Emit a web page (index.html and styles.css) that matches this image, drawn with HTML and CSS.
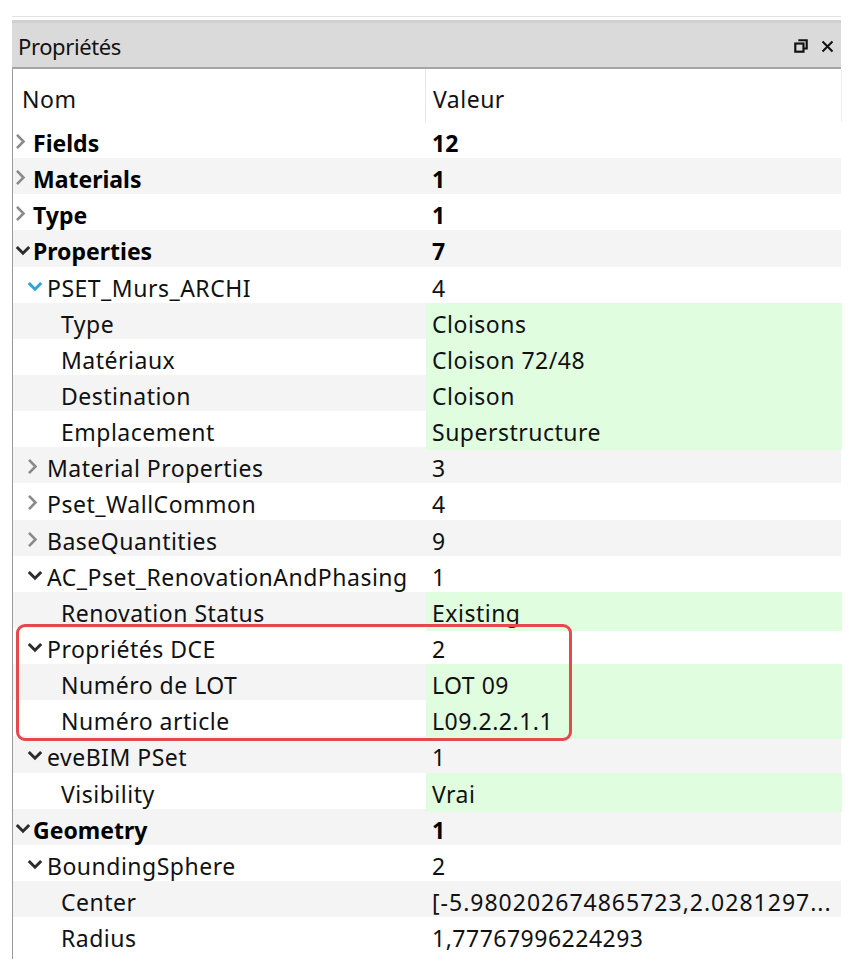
FILE: index.html
```html
<!DOCTYPE html>
<html lang="fr">
<head>
<meta charset="utf-8">
<title>Propriétés</title>
<link rel="stylesheet" href="styles.css">
</head>
<body>
<div class="panel">
  <div class="topline"></div>
  <div class="titlebar">
    <span class="title">Propriétés</span>
    <span class="tb-icons">
      <svg class="ic-restore" width="13" height="13" viewBox="0 0 13 13"><path d="M4 1.2h7.8v7.6H9.2" fill="none" stroke="#111" stroke-width="2"/><rect x="1.2" y="4.2" width="7.6" height="7.6" fill="none" stroke="#111" stroke-width="2"/></svg>
      <svg class="ic-close" width="13" height="13" viewBox="0 0 13 13"><path d="M1.5 1.5l10 10M11.5 1.5l-10 10" stroke="#111" stroke-width="2"/></svg>
    </span>
  </div>
  <div class="tree">
    <div class="head">
      <div class="hcell hname">Nom</div>
      <div class="hcell hval">Valeur</div>
    </div>
    <div class="rows">
      <div class="row"><div class="name l0 b"><span class="tw"><svg width="11" height="17" viewBox="0 0 11 17"><path d="M2 1.8l6.5 6.7-6.5 6.7" class="cr"/></svg></span>Fields</div><div class="val b">12</div></div>
      <div class="row"><div class="name l0 b"><span class="tw"><svg width="11" height="17" viewBox="0 0 11 17"><path d="M2 1.8l6.5 6.7-6.5 6.7" class="cr"/></svg></span>Materials</div><div class="val b">1</div></div>
      <div class="row"><div class="name l0 b"><span class="tw"><svg width="11" height="17" viewBox="0 0 11 17"><path d="M2 1.8l6.5 6.7-6.5 6.7" class="cr"/></svg></span>Type</div><div class="val b">1</div></div>
      <div class="row"><div class="name l0 b"><span class="tw"><svg width="16" height="11" viewBox="0 0 16 11"><path d="M1.8 2l6.2 6.2 6.2-6.2" class="cd"/></svg></span>Properties</div><div class="val b">7</div></div>
      <div class="row"><div class="name l1"><span class="tw"><svg width="16" height="11" viewBox="0 0 16 11"><path d="M1.8 2l6.2 6.2 6.2-6.2" class="cd blue"/></svg></span>PSET_Murs_ARCHI</div><div class="val">4</div></div>
      <div class="row"><div class="name l2">Type</div><div class="val g">Cloisons</div></div>
      <div class="row"><div class="name l2">Matériaux</div><div class="val g">Cloison 72/48</div></div>
      <div class="row"><div class="name l2">Destination</div><div class="val g">Cloison</div></div>
      <div class="row"><div class="name l2">Emplacement</div><div class="val g">Superstructure</div></div>
      <div class="row"><div class="name l1"><span class="tw"><svg width="11" height="17" viewBox="0 0 11 17"><path d="M2 1.8l6.5 6.7-6.5 6.7" class="cr"/></svg></span>Material Properties</div><div class="val">3</div></div>
      <div class="row"><div class="name l1"><span class="tw"><svg width="11" height="17" viewBox="0 0 11 17"><path d="M2 1.8l6.5 6.7-6.5 6.7" class="cr"/></svg></span>Pset_WallCommon</div><div class="val">4</div></div>
      <div class="row"><div class="name l1"><span class="tw"><svg width="11" height="17" viewBox="0 0 11 17"><path d="M2 1.8l6.5 6.7-6.5 6.7" class="cr"/></svg></span>BaseQuantities</div><div class="val">9</div></div>
      <div class="row"><div class="name l1"><span class="tw"><svg width="16" height="11" viewBox="0 0 16 11"><path d="M1.8 2l6.2 6.2 6.2-6.2" class="cd"/></svg></span>AC_Pset_RenovationAndPhasing</div><div class="val">1</div></div>
      <div class="row"><div class="name l2">Renovation Status</div><div class="val g">Existing</div></div>
      <div class="row"><div class="name l1"><span class="tw"><svg width="16" height="11" viewBox="0 0 16 11"><path d="M1.8 2l6.2 6.2 6.2-6.2" class="cd"/></svg></span>Propriétés DCE</div><div class="val">2</div></div>
      <div class="row"><div class="name l2">Numéro de LOT</div><div class="val g">LOT 09</div></div>
      <div class="row"><div class="name l2">Numéro article</div><div class="val g">L09.2.2.1.1</div></div>
      <div class="row"><div class="name l1"><span class="tw"><svg width="16" height="11" viewBox="0 0 16 11"><path d="M1.8 2l6.2 6.2 6.2-6.2" class="cd"/></svg></span>eveBIM PSet</div><div class="val">1</div></div>
      <div class="row"><div class="name l2">Visibility</div><div class="val g">Vrai</div></div>
      <div class="row"><div class="name l0 b"><span class="tw"><svg width="16" height="11" viewBox="0 0 16 11"><path d="M1.8 2l6.2 6.2 6.2-6.2" class="cd"/></svg></span>Geometry</div><div class="val b">1</div></div>
      <div class="row"><div class="name l1"><span class="tw"><svg width="16" height="11" viewBox="0 0 16 11"><path d="M1.8 2l6.2 6.2 6.2-6.2" class="cd"/></svg></span>BoundingSphere</div><div class="val">2</div></div>
      <div class="row"><div class="name l2">Center</div><div class="val wide">[-5.980202674865723,2.0281297...</div></div>
      <div class="row"><div class="name l2">Radius</div><div class="val">1,77767996224293</div></div>
    </div>
  </div>
  <div class="highlight"></div>
</div>
</body>
</html>
```
FILE: styles.css
```css
* { box-sizing: border-box; }
html, body { margin: 0; padding: 0; background: #fff; }
body {
  font-family: "Noto Sans", "Open Sans", sans-serif;
  color: #111;
  width: 858px;
  height: 980px;
  overflow: hidden;
}
.panel {
  position: relative;
  margin-left: 12px;
  width: 829px;
  padding-top: 16px;
}
.topline {
  height: 7px;
  border-top: 1px solid #e2e2e2;
  border-bottom: 3px solid #d0d0d0;
}
.titlebar {
  height: 46px;
  background: #dadada;
  border-bottom: 2px solid #a4a4a4;
  display: flex;
  align-items: center;
  justify-content: space-between;
  padding: 1px 7px 0 6px;
}
.title {
  font-size: 22px;
  letter-spacing: -0.4px;
  color: #111;
}
.tb-icons {
  display: flex;
  align-items: center;
  gap: 13px;
  margin-top: 1px;
}
.ic-restore { width: 14px; height: 14px; }
.tree {
  border-left: 1px solid #9a9a9a;
  padding-bottom: 6px;
}
.head {
  display: grid;
  grid-template-columns: 413px 416px;
  height: 53px;
}
.hcell {
  font-size: 23px;
  padding-top: 12px;
  line-height: 36px;
  color: #111;
  letter-spacing: 0.5px;
}
.hname { padding-left: 9px; border-right: 1px solid #e6e6e6; }
.hval { padding-left: 7px; border-right: 1px solid #ececec; }
.row {
  display: grid;
  grid-template-columns: 413px 416px;
  height: 36.15px;
  font-size: 23px;
  line-height: 36.15px;
}
.row:nth-child(even) { background: #f4f4f4; }
.name {
  display: flex;
  align-items: center;
  white-space: nowrap;
  color: #111;
  padding-top: 3px;
  letter-spacing: 0.5px;
}
.name.l0 { padding-left: 1px; }
.name.l1 { padding-left: 14px; }
.name.l2 { padding-left: 48px; }
.tw {
  width: 19px;
  height: 36px;
  margin-top: -3px;
  display: flex;
  align-items: center;
  justify-content: flex-start;
  flex: none;
}
.l0 .tw { padding-left: 1px; }
.name.l1 .tw { width: 20px; }
.tw svg { display: block; }
.cr { fill: none; stroke: #8a8a8a; stroke-width: 2.6; }
.cd { fill: none; stroke: #2c2c2c; stroke-width: 3; }
.cd.blue { stroke: #2aa4de; }
.val {
  padding-left: 6px;
  padding-top: 3px;
  white-space: nowrap;
  overflow: hidden;
  color: #111;
  letter-spacing: 0.5px;
}
.val.wide { letter-spacing: 1px; }
.b { font-weight: 700; color: #000; letter-spacing: 0; }
.val.g { background: #e1fde0; }
.highlight {
  position: absolute;
  left: 4px;
  top: 624px;
  width: 556px;
  height: 117px;
  border: 3px solid #e5484d;
  border-radius: 9px;
  pointer-events: none;
}
```
